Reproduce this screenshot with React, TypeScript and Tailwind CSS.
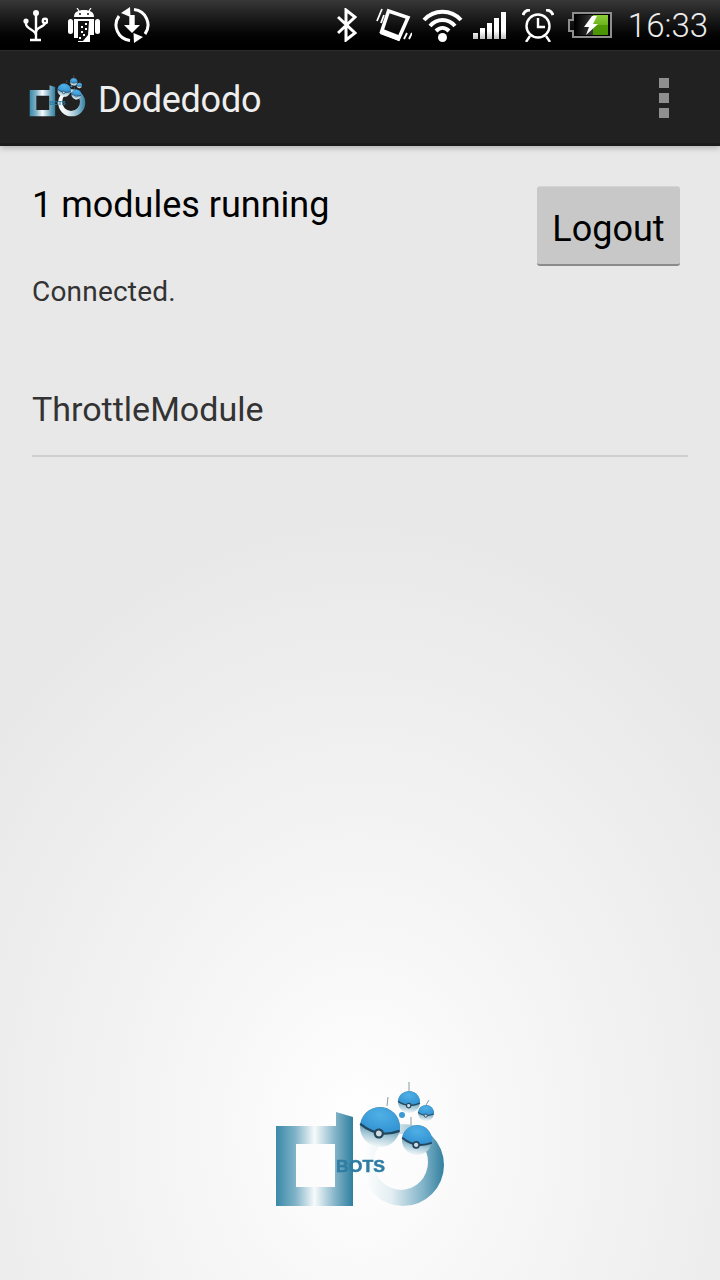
import { useId } from "react";

function Ball({ x, y, r, tilt, id }: { x: number; y: number; r: number; tilt: number; id: string }) {
  return (
    <g transform={`translate(${x} ${y}) scale(${r}) rotate(${tilt})`}>
      <circle r="1" fill={`url(#${id}under)`} />
      <path d="M-1 0.02A1 1 0 0 1 1 0.02Q0 0.6 -1 0.02Z" fill={`url(#${id}cap)`} />
      <path d="M-1 0.02Q0 0.6 1 0.02" fill="none" stroke="#24465c" strokeWidth="0.12" />
      <circle cy="0.33" r="0.2" fill="#cfdbe2" stroke="#24465c" strokeWidth="0.11" />
    </g>
  );
}

function BotsLogo({ className }: { className: string }) {
  const id = useId().replace(/[^a-zA-Z0-9]/g, "");
  return (
    <svg viewBox="0 0 200 145" className={className}>
      <defs>
        <linearGradient id={`${id}d`} x1="16" x2="93" y1="0" y2="0" gradientUnits="userSpaceOnUse">
          <stop offset="0" stopColor="#3a89a8" />
          <stop offset="0.25" stopColor="#7fb2c7" />
          <stop offset="0.5" stopColor="#f7fafb" />
          <stop offset="0.78" stopColor="#7fb1c6" />
          <stop offset="1" stopColor="#2f7f9f" />
        </linearGradient>
        <linearGradient id={`${id}o`} x1="103" x2="184" y1="0" y2="0" gradientUnits="userSpaceOnUse">
          <stop offset="0" stopColor="#ffffff" />
          <stop offset="0.35" stopColor="#e3eef2" />
          <stop offset="0.75" stopColor="#7fb2c7" />
          <stop offset="1" stopColor="#327f9f" />
        </linearGradient>
        <radialGradient id={`${id}cap`} cx="0.45" cy="0.3" r="0.75">
          <stop offset="0" stopColor="#4fb0e6" />
          <stop offset="1" stopColor="#2f8fd0" />
        </radialGradient>
        <linearGradient id={`${id}under`} x1="0" x2="0" y1="0.45" y2="1">
          <stop offset="0" stopColor="#4f8ca8" />
          <stop offset="0.5" stopColor="#a9cbd9" />
          <stop offset="1" stopColor="#f2f7f9" />
        </linearGradient>
        <filter id={`${id}soft`}>
          <feGaussianBlur stdDeviation="0.7" />
        </filter>
      </defs>
      <g filter={`url(#${id}soft)`}>
        <path fillRule="evenodd" fill={`url(#${id}d)`} d="M16 51H76V37L93 42V131H16ZM36 69V112H75V69Z" />
        <path fillRule="evenodd" fill={`url(#${id}o)`} d="M102 90A41 41 0 1 1 184 90A41 41 0 1 1 102 90ZM114 87A27 28 0 1 0 168 87A27 28 0 1 0 114 87Z" />
        <path d="M127 31L128 22M149 16V7M166 30L169 25M151 50V42" stroke="#8a9aa2" strokeWidth="1" />
        <Ball x={120} y={52} r={20} tilt={10} id={id} />
        <Ball x={157} y={65} r={15} tilt={10} id={id} />
        <Ball x={149} y={27} r={11} tilt={5} id={id} />
        <Ball x={166} y={38} r={8} tilt={5} id={id} />
        <circle cx="142" cy="40" r="3" fill="#3a9ad6" />
        <text x="76" y="97" textLength="49" lengthAdjust="spacingAndGlyphs" fontSize="17" fontWeight="700" fill="#2f7da3" stroke="#2f7da3" strokeWidth="0.5" fontFamily="'Liberation Sans', sans-serif">
          BOTS
        </text>
      </g>
    </svg>
  );
}

function UsbIcon() {
  return (
    <svg viewBox="0 0 25 33" className="h-[33px] w-[25px]" fill="none" stroke="#fff" strokeWidth="2.4">
      <circle cx="13" cy="4" r="3" fill="#fff" stroke="none" />
      <path d="M13 4V31M7 31H18" />
      <path d="M3 14V15C3 20 13 21 13 26" />
      <circle cx="3" cy="12" r="2.6" fill="#fff" stroke="none" />
      <path d="M22 14C22 18 13 18 13 23" />
      <circle cx="22" cy="12" r="2.2" />
    </svg>
  );
}

function AndroidIcon() {
  return (
    <svg viewBox="0 0 32 35" className="h-[35px] w-[32px]">
      <path fill="#fff" d="M6 9C6 4 10 2 16 2C22 2 26 4 26 9Z" />
      <path stroke="#fff" strokeWidth="1.2" d="M9 0L11 3M23 0L21 3" />
      <circle cx="12" cy="6" r="1" fill="#111" />
      <circle cx="20" cy="6" r="1" fill="#111" />
      <path fill="#fff" d="M6 11H26V27H22V34H10V30H6Z" />
      <rect x="0" y="11" width="5" height="15" rx="2.5" fill="#fff" />
      <rect x="27" y="11" width="5" height="15" rx="2.5" fill="#fff" />
      <path fill="#111" d="M10 13H21L20 27L15 33H10Z" />
      <g fill="#fff">
        <rect x="17" y="15" width="2" height="2" />
        <rect x="13" y="18" width="2" height="2" />
        <rect x="17" y="20" width="2" height="2" />
        <rect x="13" y="23" width="2" height="2" />
        <rect x="15" y="26" width="2" height="2" />
        <rect x="11" y="29" width="2" height="2" />
      </g>
    </svg>
  );
}

function DownloadSyncIcon() {
  return (
    <svg viewBox="0 0 36 36" className="h-[36px] w-[36px]" fill="none" stroke="#fff" strokeWidth="3">
      <path d="M20 2.5A15.5 15.5 0 0 1 31 27" />
      <path d="M16 33.5A15.5 15.5 0 0 1 5 9" />
      <path fill="#fff" stroke="none" d="M16 0L16.5 10L7 6ZM20 36L19.5 26L29 30Z" />
      <path fill="#fff" stroke="none" d="M15.3 8H20.7V18H26L18 26L10 18H15.3Z" />
    </svg>
  );
}

function BluetoothIcon() {
  return (
    <svg viewBox="0 0 20 34" className="h-[34px] w-[20px]" fill="none" stroke="#fff" strokeWidth="3">
      <path d="M1 9L18 25L9 32V2L18 9L1 25" />
    </svg>
  );
}

function VibrateIcon() {
  return (
    <svg viewBox="0 0 36 35" className="h-[35px] w-[36px]" fill="none" stroke="#fff">
      <path strokeWidth="3.5" d="M12.5 3L32 9.5L22.5 31L5.5 24Z" />
      <path fill="#fff" stroke="none" d="M7 21L25 28L23 33L4 26Z" />
      <path strokeWidth="1.8" d="M1 13L6 1M5 15L8 7M28 31L31 25M33 31L36 25" />
    </svg>
  );
}

function WifiIcon() {
  return (
    <svg viewBox="0 0 41 33" className="h-[33px] w-[41px]" fill="none" stroke="#fff" strokeWidth="4">
      <path d="M2 11C12 0 29 0 39 11" />
      <path d="M8 17C15 9 26 9 33 17" />
      <path d="M14 22C18 18 23 18 27 22" />
      <circle cx="20.5" cy="28.5" r="4.5" fill="#fff" stroke="none" />
    </svg>
  );
}

function SignalIcon() {
  return (
    <svg viewBox="0 0 33 27" className="h-[27px] w-[33px]">
      <defs>
        <linearGradient id="signalFade" x1="0" x2="0" y1="0" y2="27" gradientUnits="userSpaceOnUse">
          <stop offset="0" stopColor="#fff" />
          <stop offset="0.7" stopColor="#fff" />
          <stop offset="1" stopColor="#bdbdbd" />
        </linearGradient>
      </defs>
      <g fill="url(#signalFade)">
        <rect x="0" y="21" width="5" height="6" />
        <rect x="7" y="16" width="5" height="11" />
        <rect x="14" y="11" width="5" height="16" />
        <rect x="21" y="6" width="5" height="21" />
        <rect x="28" y="0" width="5" height="27" />
      </g>
    </svg>
  );
}

function AlarmIcon() {
  return (
    <svg viewBox="0 0 32 33" className="h-[33px] w-[32px]" fill="none" stroke="#fff" strokeWidth="2.4">
      <circle cx="16" cy="17" r="11.5" />
      <path d="M16 9V18H23M8 27L4 33M24 27L28 33" />
      <path strokeWidth="3" d="M1 6C2 3 5 1 8 1M31 6C30 3 27 1 24 1" />
    </svg>
  );
}

function BatteryIcon() {
  return (
    <svg viewBox="0 0 44 26" className="h-[26px] w-[44px]">
      <defs>
        <linearGradient id="batteryGreen" x1="0" x2="0" y1="0" y2="1">
          <stop offset="0" stopColor="#8ccf3a" />
          <stop offset="0.5" stopColor="#6cb31c" />
          <stop offset="0.5" stopColor="#4f9a05" />
          <stop offset="1" stopColor="#4a9204" />
        </linearGradient>
        <linearGradient id="batteryDark" x1="0" x2="1" y1="0" y2="0">
          <stop offset="0" stopColor="#000" />
          <stop offset="1" stopColor="#3a3a3a" />
        </linearGradient>
      </defs>
      <path fill="#8e8e8e" fillRule="evenodd" d="M4 0H44V26H4V20H0V7H4ZM2 9V18H6V24H42V2H6V9Z" />
      <rect x="6" y="2" width="36" height="22" fill="#000" />
      <rect x="7" y="3" width="18" height="20" fill="url(#batteryDark)" />
      <rect x="25" y="3" width="15" height="20" fill="url(#batteryGreen)" />
      <path fill="#fff" d="M24 4H29L25 12H30L18 23L21 15H16Z" />
    </svg>
  );
}

function OverflowDots() {
  return (
    <div className="mt-[1px] flex flex-col gap-[5px]">
      <span className="h-[10px] w-[10px] bg-[#8f8f8f]" />
      <span className="h-[10px] w-[10px] bg-[#8f8f8f]" />
      <span className="h-[10px] w-[10px] bg-[#8f8f8f]" />
    </div>
  );
}

export default function App() {
  return (
    <div className="flex h-[1280px] w-[720px] flex-col overflow-hidden bg-[radial-gradient(ellipse_480px_620px_at_50%_1130px,#ffffff_0%,#f6f6f6_35%,#e8e8e8_100%)] font-['Roboto',sans-serif]">
      <div className="flex h-[50px] items-center justify-between bg-gradient-to-b from-[#383838] via-[#0a0a0a] via-60% to-black pr-[12px] pl-[23px]">
        <div className="flex items-center">
          <UsbIcon />
          <span className="ml-[20px]">
            <AndroidIcon />
          </span>
          <span className="ml-[14px]">
            <DownloadSyncIcon />
          </span>
        </div>
        <div className="flex items-center">
          <BluetoothIcon />
          <span className="ml-[19px]">
            <VibrateIcon />
          </span>
          <span className="ml-[10px]">
            <WifiIcon />
          </span>
          <span className="ml-[10px]">
            <SignalIcon />
          </span>
          <span className="ml-[16px]">
            <AlarmIcon />
          </span>
          <span className="ml-[14px]">
            <BatteryIcon />
          </span>
          <span className="ml-[16px] text-[33px] leading-none font-light text-[#ececec]">16:33</span>
        </div>
      </div>

      <div className="flex h-[96px] items-center justify-between border-t border-b-[3px] border-t-[#2c2c2c] border-b-[#1a1a1a] bg-[#212121] pr-[51px] pl-[24px] shadow-[0_2px_6px_rgba(0,0,0,0.25)]">
        <div className="flex items-center">
          <BotsLogo className="h-[48px] w-[67px]" />
          <span className="ml-[7px] pt-[5px] text-[36px] leading-none tracking-[-0.25px] text-[#eeeeee]">Dodedodo</span>
        </div>
        <OverflowDots />
      </div>

      <div className="flex flex-1 flex-col pt-[40px] pr-[32px] pl-[32px]">
        <div className="flex items-start justify-between pr-[8px]">
          <div className="text-[36px] leading-[38px] text-black">1 modules running</div>
          <button className="h-[80px] w-[143px] rounded-[3px] border-t border-b-2 border-t-[#d4d4d4] border-b-[#8b8b8b] bg-[#c8c8c8] pt-[6px] text-[36px] text-black">
            Logout
          </button>
        </div>
        <div className="mt-[10px] text-[28px] leading-[32px] tracking-[0.2px] text-[#333333]">Connected.</div>
        <div className="mt-[80px] border-b-2 border-[#cfcfcf] pb-[25px] text-[34px] leading-[42px] text-[#333333]">ThrottleModule</div>
        <div className="mt-auto flex justify-center pb-[60px]">
          <BotsLogo className="h-[145px] w-[200px]" />
        </div>
      </div>
    </div>
  );
}
